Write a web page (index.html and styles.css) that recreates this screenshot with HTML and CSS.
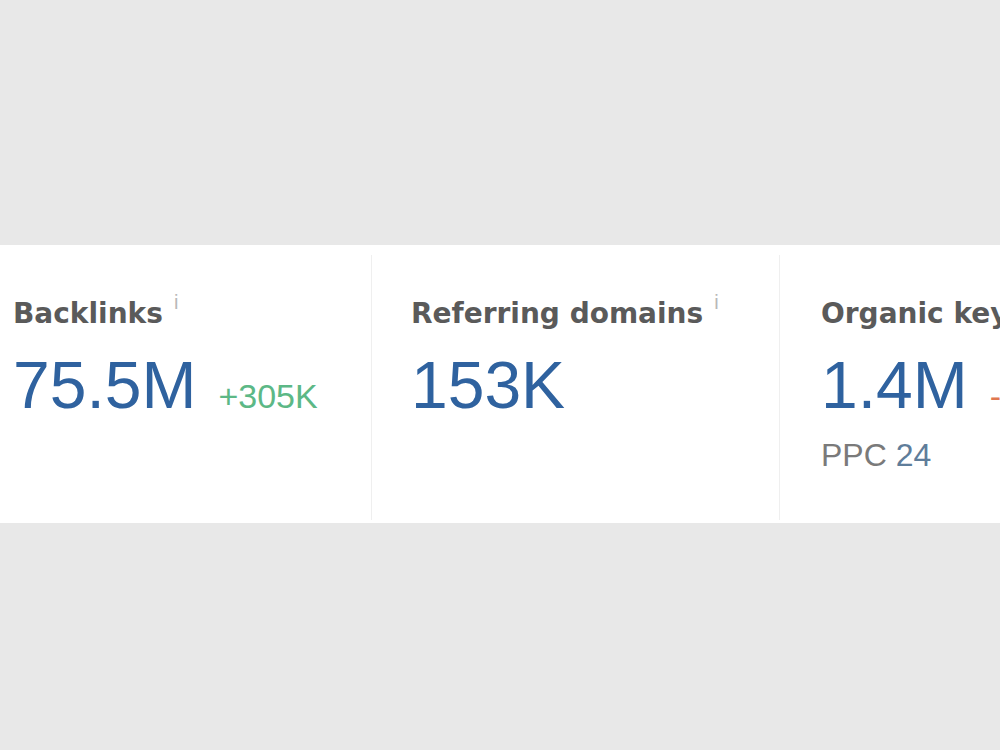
FILE: index.html
```html
<!DOCTYPE html>
<html lang="en">
    <head>
        <meta charset="utf-8">
        <title>Overview metrics</title>
        <link rel="stylesheet" href="styles.css">
    </head>
    <body>
        <div class="metrics">
            <div class="card card-first">
                <div class="label">Backlinks<span class="info">i</span></div>
                <div class="value-row">
                    <span class="value">75.5M</span>
                    <span class="delta delta-up">+305K</span>
                </div>
            </div>
            <div class="card card-mid">
                <div class="label">Referring domains<span class="info">i</span></div>
                <div class="value-row">
                    <span class="value">153K</span>
                </div>
            </div>
            <div class="card card-last">
                <div class="label">Organic keywords<span class="info">i</span></div>
                <div class="value-row">
                    <span class="value">1.4M</span>
                    <span class="delta delta-down">-12K</span>
                </div>
                <div class="sub">PPC <span class="sub-num">24</span></div>
            </div>
        </div>
    </body>
</html>
```

FILE: styles.css
```css
body {
    margin: 0;
    background-color: #e8e8e8;
    font-family: "Liberation Sans", Arial, sans-serif;
    overflow: hidden;
}
.metrics {
    display: flex;
    margin-top: 245px;
    height: 278px;
    background-color: #fff;
    white-space: nowrap;
}
.card {
    display: flex;
    flex-direction: column;
    gap: 22px;
    padding-top: 52px;
    margin-top: 10px;
    margin-bottom: 3px;
    box-sizing: border-box;
    overflow: hidden;
}
.card-first {
    width: 372px;
    flex: none;
    padding-left: 13px;
    border-right: 1px solid #efefef;
}
.card-mid {
    width: 408px;
    flex: none;
    padding-left: 39px;
    border-right: 1px solid #efefef;
}
.card-last {
    flex: 1;
    padding-left: 41px;
}
.label {
    font-family: "DejaVu Sans", sans-serif;
    font-weight: bold;
    font-size: 28px;
    line-height: 34px;
    height: 34px;
    color: #5a5a5a;
    margin-top: -10px;
}
.info {
    font-family: "Liberation Sans", sans-serif;
    font-weight: normal;
    font-size: 20px;
    line-height: 0;
    color: #b8b8b8;
    vertical-align: 14px;
    margin-left: 11px;
}
.value-row {
    display: flex;
    align-items: baseline;
    gap: 22px;
    line-height: 64px;
}
.value {
    font-size: 66px;
    color: #2f629f;
}
.delta {
    font-size: 34px;
}
.delta-up {
    color: #5cb886;
}
.delta-down {
    color: #e0774f;
}
.sub {
    font-size: 32px;
    line-height: 36px;
    color: #7a7a7a;
    margin-top: -13px;
}
.sub-num {
    color: #5f7d9a;
}
```
